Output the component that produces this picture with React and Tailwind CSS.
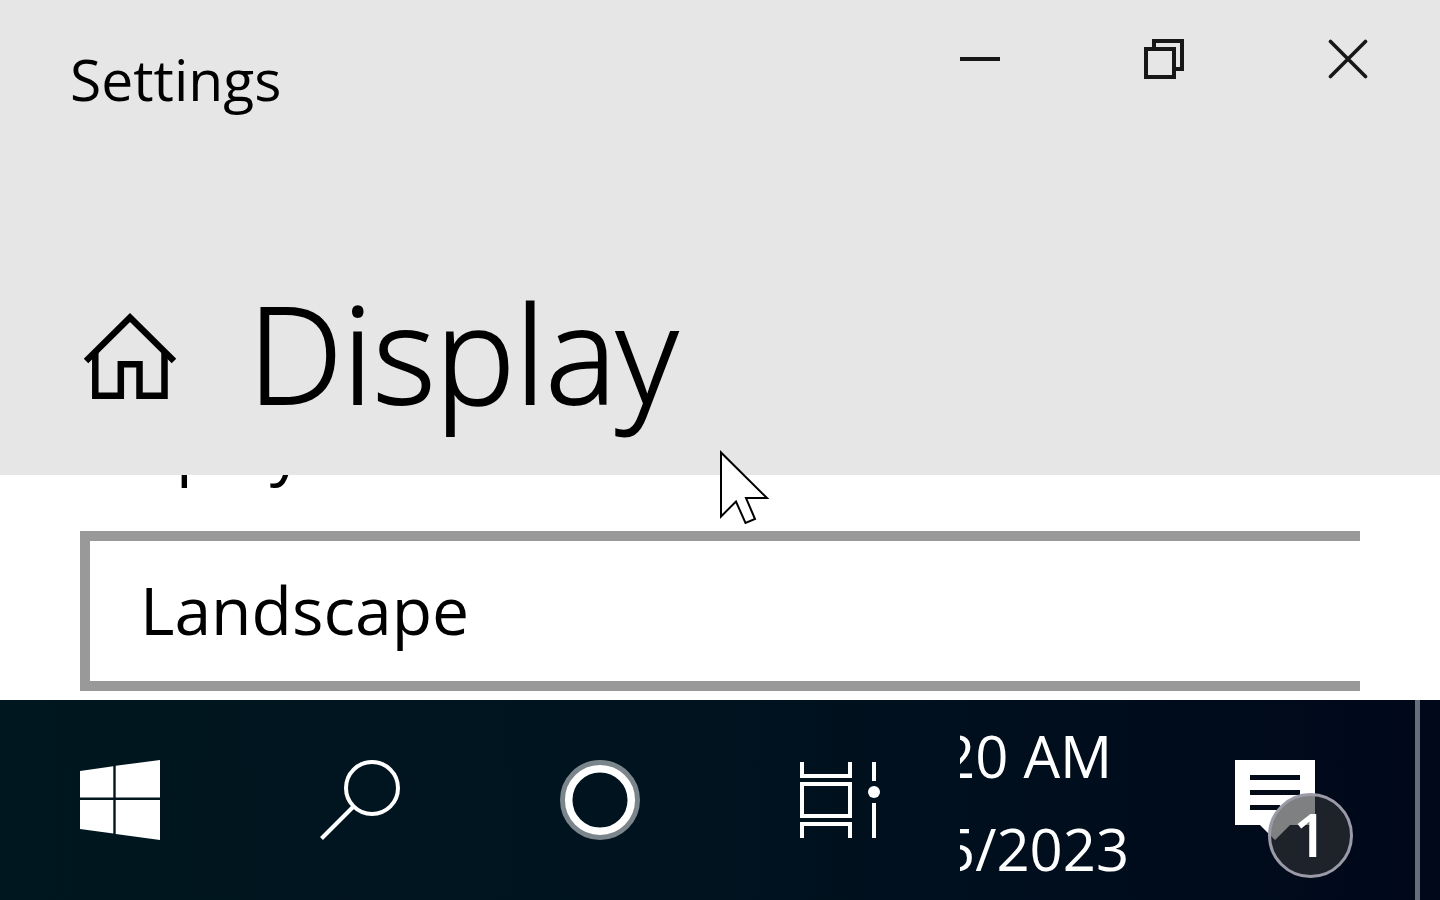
import React, { useState } from 'react';

const WINDOW_BUTTON = 'flex w-[184px] items-start justify-center pt-[39px] pb-9 hover:bg-black/10';
const TASK_BUTTON = 'flex items-center justify-center hover:bg-white/10';

function HomeIcon() {
  return (
    <svg className="h-[90px] w-[92px]" viewBox="84 311 92 90" fill="none" stroke="#000" aria-hidden="true">
      <path d="M86 361 130 317.5 174 361" strokeWidth="6.5" />
      <path d="M95.3 351V395.7H120.8V364.3H139.5V395.7H164.5V351" strokeWidth="6.5" />
    </svg>
  );
}

function WindowsIcon() {
  return (
    <svg className="size-20" viewBox="0 0 80 80" fill="#fff" aria-hidden="true">
      <path d="M0 11 33.3 6.2V37.6H0ZM35.7 5.8 80 0V37.6H35.7ZM0 40H33.3V73.5L0 69ZM35.7 40H80V80L35.7 74Z" />
    </svg>
  );
}

function SearchIcon() {
  return (
    <svg className="size-20" viewBox="0 0 80 80" fill="none" stroke="#fff" strokeWidth="4" aria-hidden="true">
      <circle cx="52" cy="28" r="26" />
      <path d="M33.5 46.5 1.5 78.5" />
    </svg>
  );
}

function CortanaIcon() {
  return (
    <svg className="size-20" viewBox="0 0 80 80" fill="none" aria-hidden="true">
      <circle cx="40" cy="40" r="37" stroke="#7b868c" strokeWidth="6" />
      <circle cx="40" cy="40" r="31.3" stroke="#fff" strokeWidth="7.5" />
    </svg>
  );
}

function TaskViewIcon() {
  return (
    <svg className="size-20" viewBox="0 0 80 80" fill="none" stroke="#fff" strokeWidth="4" aria-hidden="true">
      <path d="M2 2V16H50V2M2 24H50V56H2ZM2 78V64H50V78M74 2V21M74 43V78" />
      <circle cx="74" cy="32" r="6" fill="#fff" stroke="none" />
    </svg>
  );
}

function NotificationIcon() {
  return (
    <svg className="size-20" viewBox="0 0 80 80" aria-hidden="true">
      <path d="M0 0H80V65H55L40 80 25 65H0Z" fill="#fff" />
      <path d="M15 17.5H65M15 32.5H65M15 47.5H45" stroke="#040b18" strokeWidth="5" />
    </svg>
  );
}

function TitleBar() {
  return (
    <div className="flex items-start justify-between">
      <span className="pt-[39px] pl-[70px] text-[57px] leading-[80px]">Settings</span>
      <div className="flex">
        <button type="button" aria-label="Minimize" className={WINDOW_BUTTON}>
          <svg className="size-10" viewBox="0 0 40 40" stroke="#171717" strokeWidth="4" aria-hidden="true">
            <path d="M0 20H40" />
          </svg>
        </button>
        <button type="button" aria-label="Restore" className={WINDOW_BUTTON}>
          <svg className="size-10" viewBox="0 0 40 40" fill="none" stroke="#171717" strokeWidth="4" aria-hidden="true">
            <path d="M2 10H30V38H2ZM10 10V2H38V30H30" />
          </svg>
        </button>
        <button type="button" aria-label="Close" className={WINDOW_BUTTON}>
          <svg className="size-10" viewBox="0 0 40 40" stroke="#171717" strokeWidth="3.6" strokeLinecap="round" aria-hidden="true">
            <path d="M2.5 2.5 37.5 37.5M37.5 2.5 2.5 37.5" />
          </svg>
        </button>
      </div>
    </div>
  );
}

function Taskbar() {
  return (
    <footer className="grid h-[200px] grid-cols-6 bg-linear-to-r from-[#00171f] via-[#00131f] to-[#00081a] text-white">
      <button type="button" aria-label="Start" className={TASK_BUTTON}><WindowsIcon /></button>
      <button type="button" aria-label="Search" className={TASK_BUTTON}><SearchIcon /></button>
      <button type="button" aria-label="Cortana" className={TASK_BUTTON}><CortanaIcon /></button>
      <button type="button" aria-label="Task View" className={TASK_BUTTON}><TaskViewIcon /></button>
      <div className="flex flex-col justify-center overflow-hidden pt-1 text-[58px] leading-[93px] whitespace-nowrap">
        <span className="-ml-[18px]">20 AM</span>
        <span className="-ml-[18px]">5/2023</span>
      </div>
      <div className="flex items-stretch justify-between pr-5 pl-[35px]">
        <button type="button" aria-label="1 new notification" className="flex items-center">
          <span className="relative">
            <NotificationIcon />
            <span className="absolute top-[33px] left-[33px] flex size-[85px] items-center justify-center rounded-full border-3 border-[#9b9ba8] bg-[#303234]/62 pb-1 text-[60px] leading-none font-semibold">
              1
            </span>
          </span>
        </button>
        <button type="button" aria-label="Show desktop" className="w-[5px] bg-[#686d7c]" />
      </div>
    </footer>
  );
}

export default function App() {
  const [orientation, setOrientation] = useState('landscape');

  return (
    <div className="relative flex min-h-screen flex-col bg-white font-['Open_Sans','Noto_Sans',sans-serif] text-black">
      <header className="bg-[#e6e6e6] pb-[37px]">
        <TitleBar />
        <div className="flex items-start gap-[72px] pt-[147px] pl-[84px]">
          <a href="#home" aria-label="Home" className="pt-[45px]"><HomeIcon /></a>
          <h1 className="text-[134px] leading-[172px] font-light [-webkit-text-stroke:2px_#000]">Display</h1>
        </div>
      </header>

      {/* the list is scrolled, so the label is mostly under the header */}
      <main className="flex flex-1 flex-col overflow-hidden px-20 pb-[9px]">
        <label htmlFor="orientation" className="-mt-[74px] text-[66px] leading-[90px]">
          Display orientation
        </label>
        <select
          id="orientation"
          value={orientation}
          onChange={(e) => setOrientation(e.target.value)}
          className="mt-10 h-[160px] w-full appearance-none border-y-10 border-l-10 border-[#999] bg-white pb-1 pl-[50px] text-[66px]"
        >
          <option value="landscape">Landscape</option>
          <option value="portrait">Portrait</option>
          <option value="landscape-flipped">Landscape (flipped)</option>
          <option value="portrait-flipped">Portrait (flipped)</option>
        </select>
      </main>

      <Taskbar />

      <svg className="pointer-events-none absolute top-1/2 left-1/2 h-20 w-[50px]" viewBox="0 0 50 80" aria-hidden="true">
        <path d="M1 2.5V66.5L16 51.5 25.5 73 35 69 26 48H47Z" fill="#fff" stroke="#000" strokeWidth="2" />
      </svg>
    </div>
  );
}
